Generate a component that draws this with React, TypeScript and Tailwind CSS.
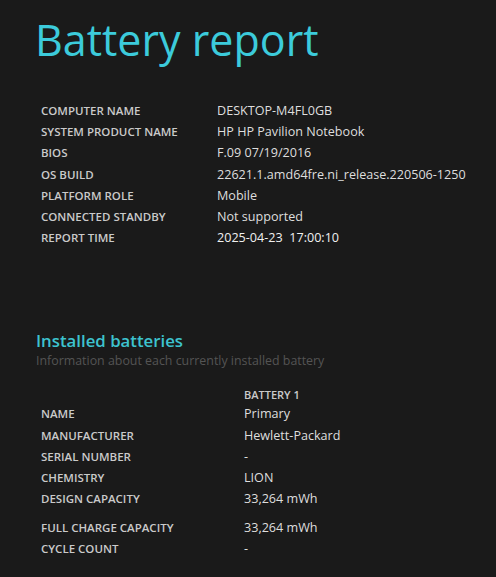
import React from 'react';

const system: [string, string][] = [
  ['COMPUTER NAME', 'DESKTOP-M4FL0GB'],
  ['SYSTEM PRODUCT NAME', 'HP HP Pavilion Notebook'],
  ['BIOS', 'F.09 07/19/2016'],
  ['OS BUILD', '22621.1.amd64fre.ni_release.220506-1250'],
  ['PLATFORM ROLE', 'Mobile'],
  ['CONNECTED STANDBY', 'Not supported'],
  ['REPORT TIME', '2025-04-23  17:00:10'],
];

const battery: [string, string][] = [
  ['NAME', 'Primary'],
  ['MANUFACTURER', 'Hewlett-Packard'],
  ['SERIAL NUMBER', '-'],
  ['CHEMISTRY', 'LION'],
  ['DESIGN CAPACITY', '33,264 mWh'],
];

const battery2: [string, string][] = [
  ['FULL CHARGE CAPACITY', '33,264 mWh'],
  ['CYCLE COUNT', '-'],
];

function Row({ label, value, col, strong }: { label: string; value: string; col: string; strong?: boolean }) {
  return (
    <div className="flex h-[21.2px] items-baseline leading-[21.2px]">
      <div className={`${col} text-[11.5px] font-semibold text-[#cacaca]`}>{label}</div>
      <div className={`whitespace-pre text-[12.6px] ${strong ? 'font-medium text-[#f0f0f0]' : 'text-[#dedede]'}`}>{value}</div>
    </div>
  );
}

export default function App() {
  return (
    <div
      className="min-h-[577px] w-[496px] bg-[#1a1a1a] pt-[8px]"
      style={{ fontFamily: '"Open Sans", "Noto Sans", sans-serif' }}
    >
      <h1 className="pl-[35px] text-[43px] leading-[64px] text-[#3ccbdb]">Battery report</h1>

      <div className="mt-[28px] pl-[41px]">
        {system.map(([l, v], i) => (
          <Row key={l} label={l} value={v} col="w-[176px]" strong={i === system.length - 1} />
        ))}
      </div>

      <div className="mt-[82px] pl-[36px]">
        <h2 className="text-[16.8px] font-semibold leading-[22px] text-[#3dc3cf]">Installed batteries</h2>
        <p className="text-[12.4px] leading-[18px] text-[#545454]">Information about each currently installed battery</p>
      </div>

      <div className="mt-[17px] pl-[41px]">
        <div className="flex h-[16px] items-center">
          <div className="w-[203px]" />
          <div className="text-[11px] font-semibold text-[#cacaca]">BATTERY 1</div>
        </div>
        {battery.map(([l, v]) => (
          <Row key={l} label={l} value={v} col="w-[203px]" />
        ))}
        <div className="h-[8px]" />
        {battery2.map(([l, v]) => (
          <Row key={l} label={l} value={v} col="w-[203px]" />
        ))}
      </div>
    </div>
  );
}
